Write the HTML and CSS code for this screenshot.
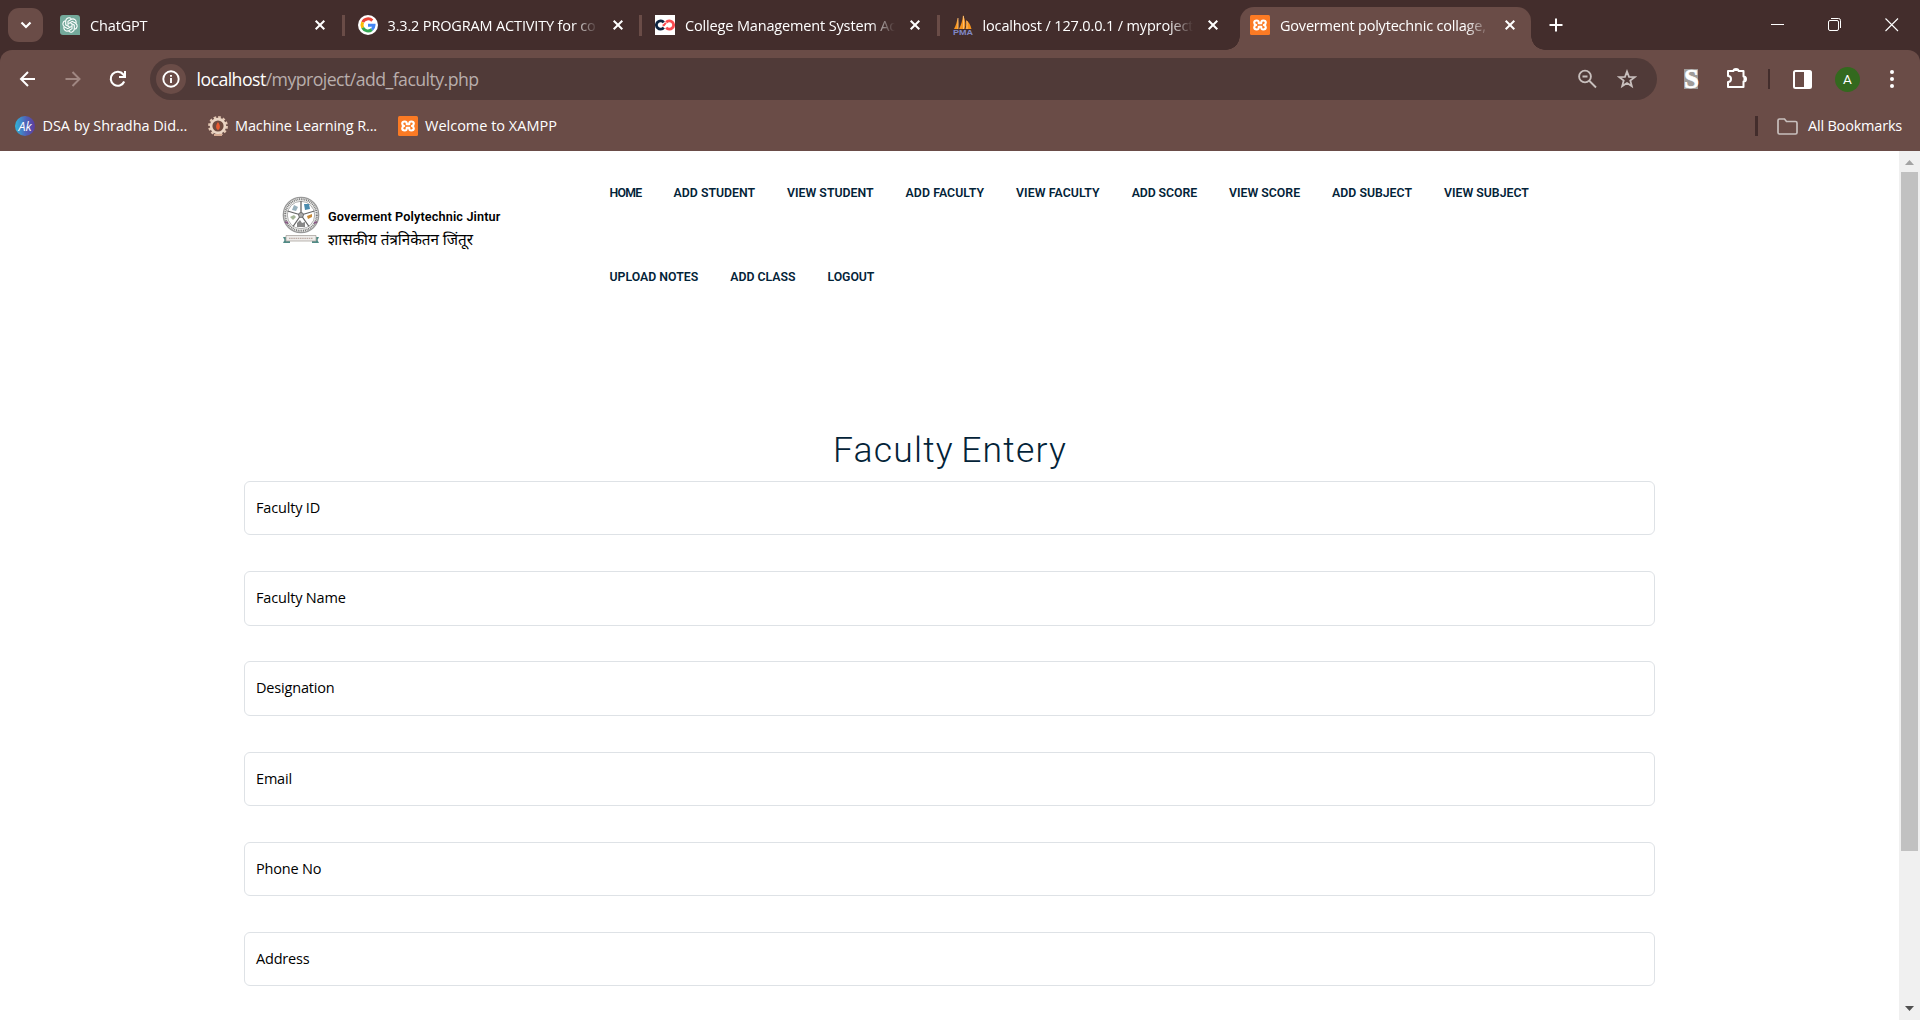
FILE: index.html
```html
<!DOCTYPE html>
<html lang="en">
<head>
<meta charset="utf-8">
<title>Goverment polytechnic collage, Jintur</title>
<link rel="stylesheet" href="styles.css">
</head>
<body>
<svg class="defs" width="0" height="0" aria-hidden="true">
  <symbol id="x" viewBox="0 0 12 12"><path d="M1.700 1.700l8.600 8.600M10.300 1.700l-8.600 8.600" stroke="#fff" stroke-width="2"/></symbol>
  <symbol id="xampp" viewBox="0 0 20 20"><rect width="20" height="20" rx="1.500" fill="#fb7a24"/><path d="M8.700 8.200C9 6.500 8.200 5.500 6.700 5.500 5 5.500 4.200 6.400 4.200 7.700 4.200 9 5 9.600 6.200 10 5 10.400 4.200 11 4.200 12.300c0 1.300.8 2.200 2.500 2.200 1.500 0 2.300-1 2-2.700h2.600c-.3 1.700.5 2.700 2 2.700 1.700 0 2.500-.9 2.500-2.200 0-1.300-.8-1.900-2-2.300 1.200-.4 2-1 2-2.300 0-1.300-.8-2.200-2.500-2.200-1.500 0-2.300 1-2 2.700z" fill="none" stroke="#fff" stroke-width="2.100" stroke-linejoin="round"/></symbol>
</svg>

<header class="browser">
  <div class="tabstrip">
    <button class="tab-search"><svg width="12" height="8" viewBox="0 0 12 8"><path d="M1.500 1.500L6 6l4.500-4.500" fill="none" stroke="#fff" stroke-width="2.200"/></svg></button>
    <div class="tabs">
      <div class="tab">
        <svg class="fav" viewBox="0 0 20 20"><path d="M3 0h14a3 3 0 0 1 3 3v17H3a3 3 0 0 1-3-3V3a3 3 0 0 1 3-3z" fill="#74a99b"/>
          <g fill="none" stroke="#fff" stroke-width="1.100"><path id="petal" d="M8 10.800V6.200l3.400-2c2.600-1.200 5.400 1.200 4.700 3.900"/><use href="#petal" transform="rotate(60 10 10)"/><use href="#petal" transform="rotate(120 10 10)"/><use href="#petal" transform="rotate(180 10 10)"/><use href="#petal" transform="rotate(240 10 10)"/><use href="#petal" transform="rotate(300 10 10)"/></g></svg>
        <span class="tab-title t1">ChatGPT</span>
        <svg class="close"><use href="#x"/></svg>
      </div>
      <div class="tab">
        <svg class="fav" viewBox="0 0 20 20"><circle cx="10" cy="10" r="10" fill="#fff"/><g fill="none" stroke-width="3"><path d="M14.300 5.600A6 6 0 0 0 4.700 7.200" stroke="#ea4335"/><path d="M4.700 7.200a6 6 0 0 0 0 5.600" stroke="#fbbc05"/><path d="M4.700 12.800a6 6 0 0 0 9.200 1.700" stroke="#34a853"/><path d="M13.900 14.500A6 6 0 0 0 16 10.200h-6" stroke="#4285f4"/></g></svg>
        <span class="tab-title t2">3.3.2 PROGRAM ACTIVITY for co</span>
        <svg class="close"><use href="#x"/></svg>
      </div>
      <div class="tab">
        <svg class="fav" viewBox="0 0 20 20"><path fill="#fff" d="M0 0h20v20H0z"/><g fill="none" stroke-width="2.800"><path d="M8.800 7.300a4.200 4.200 0 1 0 0 5.400" stroke="#0c2340"/><path d="M11.200 12.700a4.200 4.200 0 1 0 0-5.400" stroke="#fa4b50"/><path d="M7.600 10.500c1.800-.2 2.200-.9 3.200-2.800" stroke="#fa4b50" stroke-width="2"/></g></svg>
        <span class="tab-title t3">College Management System Ad</span>
        <svg class="close"><use href="#x"/></svg>
      </div>
      <div class="tab no-line">
        <svg class="fav" viewBox="0 0 20 20"><path d="M1 14C3 10 4 7 4.500 3c1 3 1 7 .5 11zM6 14c2-4 3.500-8 4-14 2.500 5 3 10 1.500 14zM12.500 14c1-3 1-6 .5-9 3 2 4.500 5 5.500 9z" fill="#f7941d"/><path d="M5 3v11M10.500 1v13M14 6v8" stroke="#ffc98a" stroke-width=".8"/><text x="10" y="19.700" text-anchor="middle" class="pma" textLength="20" lengthAdjust="spacingAndGlyphs">PMA</text></svg>
        <span class="tab-title t4">localhost / 127.0.0.1 / myproject</span>
        <svg class="close"><use href="#x"/></svg>
      </div>
      <div class="tab active">
        <svg class="fav"><use href="#xampp"/></svg>
        <span class="tab-title t5">Goverment polytechnic collage,</span>
        <svg class="close"><use href="#x"/></svg>
      </div>
    </div>
    <svg class="plus" width="14" height="14" viewBox="0 0 14 14"><path d="M7 .5v13M.5 7h13" stroke="#fff" stroke-width="2"/></svg>
    <div class="window-buttons">
      <svg width="14" height="14" viewBox="0 0 14 14"><path d="M0 6.500h13" stroke="#fff"/></svg>
      <svg width="14" height="14" viewBox="0 0 14 14" fill="none" stroke="#fff"><rect x=".5" y="2.500" width="10" height="10" rx="1.500"/><path d="M3 .5h7.500a2 2 0 0 1 2 2V10"/></svg>
      <svg width="14" height="14" viewBox="0 0 14 14"><path d="M.5.500l12.500 12.500M13 .5L.5 13" stroke="#fff" stroke-width="1.100"/></svg>
    </div>
  </div>

  <div class="toolbar">
    <div class="nav-buttons">
      <svg width="18" height="18" viewBox="0 0 18 18"><path d="M16 9H2.500M9 2L2 9l7 7" fill="none" stroke="#fff" stroke-width="2"/></svg>
      <svg width="18" height="18" viewBox="0 0 18 18"><path d="M1.500 9H15M8.500 2l7 7-7 7" fill="none" stroke="#a08782" stroke-width="2"/></svg>
      <svg width="18" height="18" viewBox="0 0 18 18"><path d="M15.200 11.500A7 7 0 1 1 14.300 4.500L16 6.200" fill="none" stroke="#fff" stroke-width="2.100"/><path d="M16 1v6h-6" fill="none" stroke="#fff" stroke-width="2"/></svg>
    </div>
    <div class="omnibox">
      <span class="info"><svg width="18" height="18" viewBox="0 0 18 18"><circle cx="9" cy="9" r="7.700" fill="none" stroke="#fff" stroke-width="1.900"/><path d="M9 8v5M9 5v1.800" stroke="#fff" stroke-width="1.900"/></svg></span>
      <span class="url"><b>localhost</b>/myproject/add_faculty.php</span>
      <svg class="zoom" width="20" height="20" viewBox="0 0 20 20" fill="none" stroke="#c8bfbd" stroke-width="1.900"><circle cx="8" cy="7.500" r="5.900"/><path d="M12 11.500l7 7M5.500 7.500h5"/></svg>
      <svg class="star" width="20" height="20" viewBox="0 0 20 20"><path d="M10 2.500l2 5.300 5.700.3-4.400 3.500 1.500 5.500-4.800-3.100-4.800 3.100 1.500-5.500-4.400-3.500 5.700-.3z" fill="none" stroke="#c8bfbd" stroke-width="1.800"/></svg>
    </div>
    <span class="ext-s">S</span>
    <svg class="puzzle" width="22" height="22" viewBox="0 0 22 22"><path d="M2 4h5.500a2.500 2 0 0 1 5 0H17.500v5.500a2.500 2.500 0 0 1 0 5V20H2v-5a3 3 0 0 0 0-6z" fill="none" stroke="#fff" stroke-width="2" stroke-linejoin="round"/><path d="M8 4a2 2 0 0 1 4 0zM17.500 10a2 2 0 0 1 0 4z" fill="#fff"/></svg>
    <i class="sep"></i>
    <svg class="panel" width="19" height="19" viewBox="0 0 19 19"><rect x="1" y="1" width="17" height="17" rx="1.500" fill="none" stroke="#fff" stroke-width="2"/><path d="M11 1h7v17h-7z" fill="#fff"/></svg>
    <span class="avatar">A</span>
    <svg class="dots" width="6" height="20" viewBox="0 0 6 20" fill="#fff"><circle cx="3" cy="3" r="2"/><circle cx="3" cy="10" r="2"/><circle cx="3" cy="17" r="2"/></svg>
  </div>

  <div class="bookmarks">
    <svg class="fav" viewBox="0 0 20 20"><linearGradient id="ak"><stop stop-color="#30b5d8"/><stop offset=".55" stop-color="#4f62b8"/><stop offset="1" stop-color="#5c3c9c"/></linearGradient><circle cx="10" cy="10" r="10" fill="url(#ak)"/><text x="10" y="14.800" text-anchor="middle" class="ak">Ak</text></svg>
    <span class="b1">DSA by Shradha Did...</span>
    <svg class="fav" viewBox="0 0 20 20"><circle cx="10" cy="10" r="8.700" fill="none" stroke="#e5c9b5" stroke-width="2.400" stroke-dasharray="2.600 1.950"/><circle cx="10" cy="10" r="6.900" fill="#6e4a3f" stroke="#ead5c4" stroke-width="2.600"/><path d="M10 6c2.500 3 2.500 7 0 8-2.500-1-2.500-5 0-8z" fill="#e85a30"/><path d="M6 18h8v2H6z" fill="#d6ab93"/></svg>
    <span class="b2">Machine Learning R...</span>
    <svg class="fav"><use href="#xampp"/></svg>
    <span class="b3">Welcome to XAMPP</span>
    <i class="sep bsep"></i>
    <svg class="folder" width="21" height="17" viewBox="0 0 21 17"><path d="M2.500 1h5l2 2.500h9A1.500 1.500 0 0 1 20 5v9.500a1.500 1.500 0 0 1-1.500 1.500h-16A1.500 1.500 0 0 1 1 14.500v-12A1.500 1.500 0 0 1 2.500 1z" fill="none" stroke="#c8bfbd" stroke-width="1.700"/></svg>
    <span class="b4">All Bookmarks</span>
  </div>
</header>

<div class="viewport">
  <main class="page">
    <div class="masthead">
      <a class="brand">
        <svg class="emblem" width="38" height="48" viewBox="0 0 38 48">
          <circle cx="19" cy="19" r="17.700" fill="#f4f4f2" stroke="#999" stroke-width="1.300"/>
          <circle cx="19" cy="19" r="15.800" fill="none" stroke="#777" stroke-width="2" stroke-dasharray="1 .8"/>
          <circle cx="19" cy="19" r="13.700" fill="#fff" stroke="#999" stroke-width=".8"/>
          <path d="M19 19V5M19 19L5.500 15M19 19l13.500-4M19 19l-8 11.500M19 19l8 11.500" stroke="#666" stroke-width="1.300"/>
          <path d="M12 9l4 2-2 4-4-1z" fill="#99b1bd"/><path d="M22 8h5l1 5-5 1z" fill="#4b8cae"/><path d="M25 20l5-2v3l-4 2z" fill="#c88b38"/><path d="M8 21l4-2 2 2-3 3z" fill="#a6b698"/><path d="M15 27l3-3 2 3 3-1v5h-8z" fill="#888"/>
          <circle cx="19" cy="19" r="2.500" fill="#aaa" stroke="#555" stroke-width=".7"/><path d="M3 26l3 1M32 27l3-1" stroke="#885b85" stroke-width="2"/>
          <path d="M1 41h7v6H1l1.500-3zM37 41h-7v6h7l-1.500-3z" fill="#508b86"/>
          <path d="M4 39.500h30V45H4z" fill="#eeecea" stroke="#aaa4a0" stroke-width=".8"/><path d="M7 42.300h24" fill="none" stroke="#aa938a" stroke-width=".9" stroke-dasharray="1.500 .7"/>
        </svg>
        <span class="brand-text"><span class="brand-en">Goverment Polytechnic Jintur</span><span class="brand-mr" lang="mr">शासकीय तंत्रनिकेतन जिंतूर</span></span>
      </a>
      <nav class="menu">
        <a class="tight">HOME</a><a>ADD STUDENT</a><a>VIEW STUDENT</a><a class="wide">ADD FACULTY</a><a class="wide">VIEW FACULTY</a><a class="snug">ADD SCORE</a><a>VIEW SCORE</a><a>ADD SUBJECT</a><a>VIEW SUBJECT</a><a>UPLOAD NOTES</a><a>ADD CLASS</a><a class="snug">LOGOUT</a>
      </nav>
    </div>
    <h1>Faculty Entery</h1>
    <form class="entry">
      <div class="field">Faculty ID</div>
      <div class="field">Faculty Name</div>
      <div class="field">Designation</div>
      <div class="field">Email</div>
      <div class="field">Phone No</div>
      <div class="field">Address</div>
    </form>
  </main>
  <div class="scrollbar">
    <svg width="9" height="5" viewBox="0 0 9 5"><path d="M0 5L4.500 0 9 5z" fill="#a3a3a3"/></svg>
    <div class="thumb"></div>
    <svg class="down" width="9" height="5" viewBox="0 0 9 5"><path d="M0 0l4.500 5L9 0z" fill="#505050"/></svg>
  </div>
</div>
</body>
</html>
```
FILE: styles.css
```css
* { box-sizing: border-box; }
body { margin: 0; width: 1920px; height: 1020px; overflow: hidden; background: #fff; font-family: "Open Sans", "Noto Sans", sans-serif; }
svg { display: block; flex: none; }
.defs { position: absolute; }
.browser { height: 151px; background: linear-gradient(#432d2c 64px, #6a4c47 64px); color: #fff; font-size: 14.5px; }

.tabstrip { display: flex; height: 50px; background: #432d2c; }
.tab-search { display: flex; align-items: center; justify-content: center; width: 35px; height: 34px; margin: 8px 4px 0 8px; padding: 0; border: 0; border-radius: 11px; background: #6a4c47; }
.tabs { display: flex; height: 50px; }
.tab { display: flex; align-items: center; width: 297.5px; padding-left: 13px; background: linear-gradient(#6a4c47, #6a4c47) right 15px / 3px 21px no-repeat; }
.tab.no-line { background: none; }
.fav { width: 20px; height: 20px; flex: none; }
.tab-title { width: 210px; margin-left: 10px; overflow: hidden; white-space: nowrap; letter-spacing: -.15px; mask-image: linear-gradient(90deg, #000 185px, transparent 210px); }
.t5 { letter-spacing: -.2px; }
.close { width: 12px; height: 12px; margin-left: 14px; }
.tab.active { position: relative; width: 291px; margin: 7px 0 0 3px; padding: 0 0 7px 10px; background: #6a4c47; border-radius: 14px 14px 0 0; }
.tab.active::before, .tab.active::after { content: ""; position: absolute; bottom: 0; width: 14px; height: 14px; }
.tab.active::before { left: -14px; background: radial-gradient(circle at 0 0, transparent 13.5px, #6a4c47 14px); }
.tab.active::after { right: -14px; background: radial-gradient(circle at 100% 0, transparent 13.5px, #6a4c47 14px); }
.plus { margin: 18px 0 0 17.5px; }
.window-buttons { display: flex; gap: 43px; margin: 18px 21px 0 auto; }
.pma { font: bold 7.5px "Liberation Sans", sans-serif; fill: #8088c4; }

.toolbar { display: flex; align-items: center; height: 58px; background: #6a4c47; border-radius: 12px 12px 0 0; }
.nav-buttons { display: flex; gap: 27px; width: 131px; margin-left: 19px; }
.omnibox { display: flex; align-items: center; width: 1507px; height: 42px; padding: 0 20px 0 6px; border-radius: 21px; background: #503a38; }
.info { display: flex; align-items: center; justify-content: center; width: 30px; height: 30px; border-radius: 50%; background: #6a4c47; }
.url { margin-left: 10.5px; font-size: 17.7px; color: #b9aeac; letter-spacing: -.55px; white-space: nowrap; }
.url b { font-weight: 400; color: #fff; }
.zoom { margin-left: auto; }
.star { margin-left: 20.5px; }
.ext-s { width: 14px; height: 20px; margin-left: 27px; background: #a09c9a; color: #fff; font: bold 27px/21px "Liberation Serif", serif; text-align: center; -webkit-text-stroke: .6px #fff; }
.puzzle { margin: -2px 0 0 27.5px; }
.sep { width: 2px; height: 20px; margin-left: 20.5px; background: #432d2c; }
.panel { margin-left: 23px; }
.avatar { width: 25px; height: 25px; margin-left: 23px; border-radius: 50%; background: #33691e; font: 13.5px/25px Roboto, sans-serif; text-align: center; }
.dots { margin-left: 29px; }

.bookmarks { display: flex; align-items: center; height: 36px; padding: 0 18px 0 15px; white-space: nowrap; }
.bookmarks span { flex: none; margin-left: 7.5px; padding-bottom: 2px; }
.bookmarks .b1 { width: 165.5px; letter-spacing: -.07px; }
.bookmarks .b2 { width: 162.5px; letter-spacing: -.12px; margin-left: 7px; }
.bookmarks .b3 { margin-left: 7.5px; }
.bookmarks .b4 { width: 94px; margin-left: 10px; letter-spacing: -.2px; }
.bsep { width: 3px; margin-left: auto; }
.folder { margin-left: 19px; }
.ak { font: italic 12.5px "Open Sans", sans-serif; fill: #fff; }

.viewport { display: flex; height: 869px; }
.page { flex: 1; color: #000; }
.masthead { display: flex; height: 244px; padding-left: 281.5px; }
.brand { display: flex; width: 328px; padding-top: 45px; }
.brand-text { display: flex; flex-direction: column; margin: 11px 0 0 8.5px; }
.brand-en { height: 20px; font: 600 12.7px/20px Roboto, sans-serif; letter-spacing: .13px; white-space: nowrap; }
.brand-mr { height: 26px; font: 15.2px/29px "Noto Sans Devanagari", "Noto Sans", sans-serif; white-space: nowrap; }
.menu { display: flex; flex-wrap: wrap; align-content: flex-start; column-gap: 32px; width: 960px; color: #032338; font: 600 12.3px/84px Roboto, sans-serif; }
.menu .tight { letter-spacing: -.7px; }
.menu .snug { letter-spacing: -.08px; }
.menu .wide { letter-spacing: .08px; }
h1 { margin: 0; height: 86px; padding: 34px 0 0 1px; text-align: center; color: #032338; font: 300 35.5px/42px Roboto, sans-serif; letter-spacing: 1.2px; word-spacing: -2.5px; }
.entry { display: flex; flex-direction: column; gap: 35.8px; width: 1411px; margin-left: 244px; }
.field { height: 54.4px; padding-left: 11px; border: 1px solid #dee2e6; border-radius: 6px; font-size: 14.5px; line-height: 52px; letter-spacing: -.18px; }
.scrollbar { display: flex; flex-direction: column; align-items: center; width: 21px; padding: 9px 0; background: #f0f0f0; }
.thumb { width: 17px; height: 679px; margin-top: 7px; background: #c1c1c1; }
.down { margin-top: auto; }
```
